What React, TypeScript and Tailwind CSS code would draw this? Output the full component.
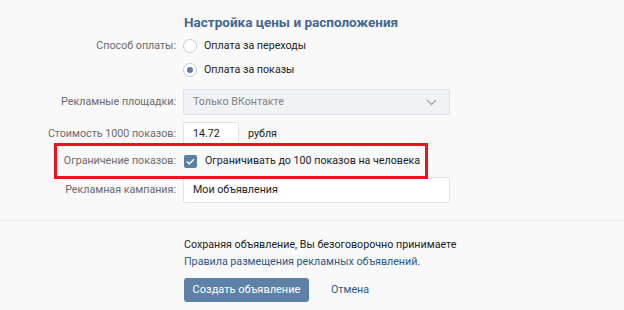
import React from 'react';

const Label = ({ children }: { children: React.ReactNode }) => (
  <div className="w-[176px] shrink-0 text-right text-[#6b6b6b]">{children}</div>
);

const Radio = ({ checked, label }: { checked?: boolean; label: string }) => (
  <div className="flex items-center h-[24px]">
    <span className="w-[14px] h-[14px] rounded-full border border-[#c5ccd4] bg-white flex items-center justify-center">
      {checked && <span className="w-[6px] h-[6px] rounded-full bg-[#5b7fa6]" />}
    </span>
    <span className="ml-[7px] text-[#222]">{label}</span>
  </div>
);

export default function App() {
  return (
    <div
      className="w-[624px] h-[310px] bg-[#f9f9f9] overflow-hidden text-[10.7px] leading-[16px]"
      style={{ fontFamily: 'Roboto, "Open Sans", Arial, sans-serif' }}
    >
      <div className="relative h-[220px]">
        {/* annotation around the limit row */}
        <div className="absolute left-[54px] top-[143px] w-[374px] h-[36px] border-[3px] border-[#e8141f]" />

        <div className="pt-[14px] pl-[184px]">
          <h2 className="font-bold text-[13.5px] leading-[16px] text-[#45678f]">Настройка цены и расположения</h2>
        </div>

        <div className="flex mt-[4px]">
          <div className="flex flex-col">
            <div className="flex items-center h-[24px]">
              <Label>Способ оплаты:</Label>
            </div>
          </div>
          <div className="ml-[7px] flex flex-col">
            <Radio label="Оплата за переходы" />
            <Radio checked label="Оплата за показы" />
          </div>
        </div>

        <div className="flex items-center mt-[7px] h-[26px]">
          <Label>Рекламные площадки:</Label>
          <div className="ml-[7px] w-[267px] h-[26px] bg-[#f0f2f5] border border-[#dfe2e8] rounded-[2px] flex items-center justify-between pl-[9px] pr-[12px]">
            <span className="text-[#828282]">Только ВКонтакте</span>
            <svg width="11" height="7" viewBox="0 0 11 7" fill="none">
              <path d="M1 1l4.5 4.5L10 1" stroke="#a0a9b4" strokeWidth="1.3" />
            </svg>
          </div>
        </div>

        <div className="flex items-center mt-[7px] h-[24px]">
          <Label>Стоимость 1000 показов:</Label>
          <div className="ml-[7px] w-[56px] h-[24px] bg-white border border-[#dfe2e8] rounded-[2px] flex items-center pl-[9px] text-[#222]">
            14.72
          </div>
          <span className="ml-[9px] text-[#222]">рубля</span>
        </div>

        <div className="flex items-center mt-[3px] h-[24px]">
          <Label>Ограничение показов:</Label>
          <span className="ml-[8px] w-[13px] h-[13px] rounded-[2px] bg-[#5b7fa6] flex items-center justify-center">
            <svg width="9" height="7" viewBox="0 0 9 7" fill="none">
              <path d="M1 3.6l2.3 2.2L8 1.2" stroke="white" strokeWidth="1.5" />
            </svg>
          </span>
          <span className="ml-[8px] text-[#222]">Ограничивать до 100 показов на человека</span>
        </div>

        <div className="flex items-center mt-[4px] h-[26px]">
          <Label>Рекламная кампания:</Label>
          <div className="ml-[7px] w-[267px] h-[26px] bg-white border border-[#dfe2e8] rounded-[2px] flex items-center pl-[9px] text-[#222]">
            Мои объявления
          </div>
        </div>
      </div>

      <div className="border-t border-[#e3e7ec] pl-[184px] pt-[15px]">
        <p className="text-[#222] leading-[17px]">Сохраняя объявление, Вы безоговорочно принимаете</p>
        <a className="block text-[#2a5885] leading-[17px]">Правила размещения рекламных объявлений.</a>
        <div className="flex items-center mt-[8px]">
          <button className="w-[125px] h-[24px] rounded-[3px] bg-[#5e81a8] text-white text-[11px]">
            Создать объявление
          </button>
          <a className="ml-[22px] text-[#2a5885]">Отмена</a>
        </div>
      </div>
    </div>
  );
}
